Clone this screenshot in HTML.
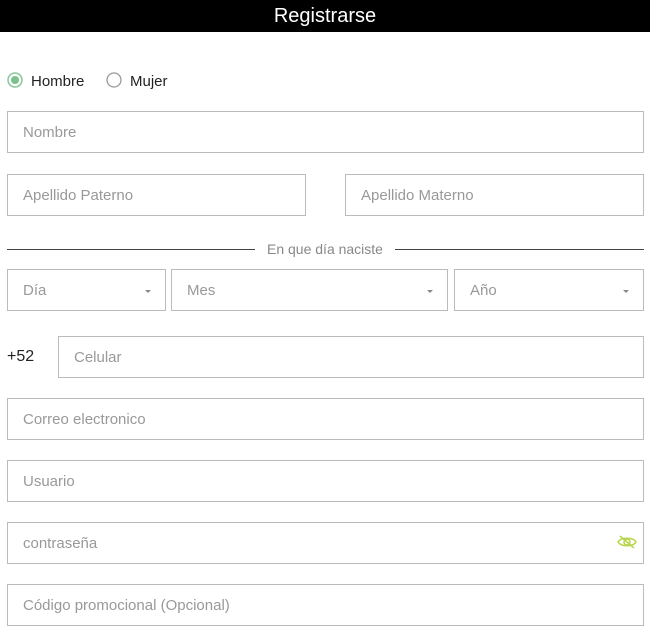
<!DOCTYPE html><html><head><style>
body{margin:0;width:650px;height:634px;background:#fff;font-family:"Liberation Sans",sans-serif;position:relative;overflow:hidden}
.h{position:absolute;left:0;top:0;width:650px;height:32px;background:#000;color:#fff;font-size:20px;text-align:center;line-height:32px}
.f{position:absolute;box-sizing:border-box;border:1px solid #bbb;height:42px;color:#999;font-size:15px;line-height:42px;padding-left:15px}
.ar{position:absolute;right:14px;top:20px;width:0;height:0;border-left:3px solid transparent;border-right:3px solid transparent;border-top:3px solid #888}
.t{position:absolute;font-size:15px;color:#222}
</style></head><body>
<div class="h">Registrarse</div>
<svg style="position:absolute;left:7px;top:72px" width="16" height="16"><circle cx="8" cy="8" r="7" fill="none" stroke="#8ac79a" stroke-width="1.5"/><circle cx="8" cy="8" r="4" fill="#7cc08e"/></svg>
<div class="t" style="left:31px;top:73px">Hombre</div>
<svg style="position:absolute;left:106px;top:72px" width="16" height="16"><circle cx="8" cy="8" r="7" fill="none" stroke="#999" stroke-width="1.3"/></svg>
<div class="t" style="left:130px;top:73px">Mujer</div>
<div class="f" style="left:7px;top:111px;width:637px">Nombre</div>
<div class="f" style="left:7px;top:174px;width:299px">Apellido Paterno</div>
<div class="f" style="left:345px;top:174px;width:299px">Apellido Materno</div>
<div style="position:absolute;left:7px;top:249px;width:248px;border-top:1px solid #444"></div>
<div style="position:absolute;left:395px;top:249px;width:249px;border-top:1px solid #444"></div>
<div style="position:absolute;left:255px;top:241px;width:140px;text-align:center;font-size:14px;color:#888">En que día naciste</div>
<div class="f" style="left:7px;top:269px;width:159px">Día<span class="ar"></span></div>
<div class="f" style="left:171px;top:269px;width:277px">Mes<span class="ar"></span></div>
<div class="f" style="left:454px;top:269px;width:190px">Año<span class="ar"></span></div>
<div class="t" style="left:7px;top:348px;font-size:16px">+52</div>
<div class="f" style="left:58px;top:336px;width:586px">Celular</div>
<div class="f" style="left:7px;top:398px;width:637px">Correo electronico</div>
<div class="f" style="left:7px;top:460px;width:637px">Usuario</div>
<div class="f" style="left:7px;top:522px;width:637px">contraseña
<svg style="position:absolute;right:6px;top:11px" width="20" height="16" viewBox="0 0 20 16"><path d="M1 8C4 3 16 3 19 8C16 13 4 13 1 8Z" fill="none" stroke="#b8d44a" stroke-width="1.5"/><circle cx="10" cy="8" r="3" fill="none" stroke="#b8d44a" stroke-width="1.5"/><path d="M3 2L17 14" stroke="#b8d44a" stroke-width="1.5"/></svg></div>
<div class="f" style="left:7px;top:584px;width:637px">Código promocional (Opcional)</div>
</body></html>
